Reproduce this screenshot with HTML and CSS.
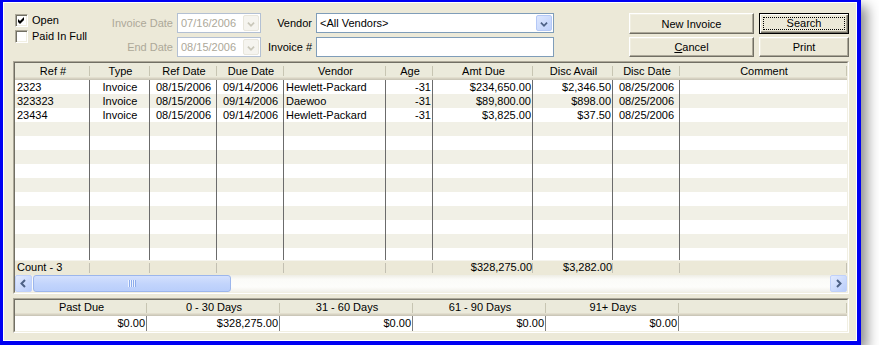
FILE: index.html
```html
<!DOCTYPE html>
<html lang="en">
  <head>
    <meta charset="UTF-8" />
    <title>Open Invoices</title>
    <link rel="stylesheet" href="styles.css">
  </head>
  <body>
    <div class="window">
      <div class="frame">
        <div class="toolbar">
          <div class="checks">
            <div class="check">
              <span class="box"><svg width="11" height="11" viewBox="0 0 11 11"><polygon points="2,4 4,6 8,2 8,5 4,9 2,7" fill="#000"/></svg></span>Open
            </div>
            <div class="check"><span class="box"></span>Paid In Full</div>
          </div>

          <div class="fields dates">
            <span class="lbl">Invoice Date</span>
            <div class="combo off">
              <span class="val">07/16/2006</span>
              <span class="drop"><svg width="16" height="16" viewBox="0 0 16 16"><polyline points="4.5,6.5 8,10 11.5,6.5" fill="none" stroke="#c9c7ba" stroke-width="2"/></svg></span>
            </div>
            <span class="lbl">End Date</span>
            <div class="combo off">
              <span class="val">08/15/2006</span>
              <span class="drop"><svg width="16" height="16" viewBox="0 0 16 16"><polyline points="4.5,6.5 8,10 11.5,6.5" fill="none" stroke="#c9c7ba" stroke-width="2"/></svg></span>
            </div>
          </div>

          <div class="fields vendor">
            <span class="lbl">Vendor</span>
            <div class="combo">
              <span class="val">&lt;All Vendors&gt;</span>
              <span class="drop"><svg width="16" height="16" viewBox="0 0 16 16"><polyline points="4.5,6.5 8,10 11.5,6.5" fill="none" stroke="#4d6185" stroke-width="2"/></svg></span>
            </div>
            <span class="lbl">Invoice #</span>
            <div class="textbox"></div>
          </div>

          <div class="buttons">
            <button class="btn">New Invoice</button>
            <button class="btn default"><span class="focus">Search</span></button>
            <button class="btn"><u>C</u>ancel</button>
            <button class="btn">Print</button>
          </div>
        </div>

        <div class="grid">
          <div class="grid-in">
            <div class="row head">
              <span>Ref #</span><span>Type</span><span>Ref Date</span><span>Due Date</span><span>Vendor</span><span>Age</span><span>Amt Due</span><span>Disc Avail</span><span>Disc Date</span><span>Comment</span>
            </div>
            <div class="body">
              <div class="row"><span>2323</span><span class="c">Invoice</span><span class="c">08/15/2006</span><span class="c">09/14/2006</span><span>Hewlett-Packard</span><span class="r">-31</span><span class="r">$234,650.00</span><span class="r">$2,346.50</span><span class="c">08/25/2006</span><span></span></div>
              <div class="row"><span>323323</span><span class="c">Invoice</span><span class="c">08/15/2006</span><span class="c">09/14/2006</span><span>Daewoo</span><span class="r">-31</span><span class="r">$89,800.00</span><span class="r">$898.00</span><span class="c">08/25/2006</span><span></span></div>
              <div class="row"><span>23434</span><span class="c">Invoice</span><span class="c">08/15/2006</span><span class="c">09/14/2006</span><span>Hewlett-Packard</span><span class="r">-31</span><span class="r">$3,825.00</span><span class="r">$37.50</span><span class="c">08/25/2006</span><span></span></div>
              <div class="row"><span></span><span></span><span></span><span></span><span></span><span></span><span></span><span></span><span></span><span></span></div>
              <div class="row"><span></span><span></span><span></span><span></span><span></span><span></span><span></span><span></span><span></span><span></span></div>
              <div class="row"><span></span><span></span><span></span><span></span><span></span><span></span><span></span><span></span><span></span><span></span></div>
              <div class="row"><span></span><span></span><span></span><span></span><span></span><span></span><span></span><span></span><span></span><span></span></div>
              <div class="row"><span></span><span></span><span></span><span></span><span></span><span></span><span></span><span></span><span></span><span></span></div>
              <div class="row"><span></span><span></span><span></span><span></span><span></span><span></span><span></span><span></span><span></span><span></span></div>
              <div class="row"><span></span><span></span><span></span><span></span><span></span><span></span><span></span><span></span><span></span><span></span></div>
              <div class="row"><span></span><span></span><span></span><span></span><span></span><span></span><span></span><span></span><span></span><span></span></div>
              <div class="row"><span></span><span></span><span></span><span></span><span></span><span></span><span></span><span></span><span></span><span></span></div>
              <div class="row"><span></span><span></span><span></span><span></span><span></span><span></span><span></span><span></span><span></span><span></span></div>
            </div>
            <div class="row foot">
              <span>Count - 3</span><span></span><span></span><span></span><span></span><span></span><span class="r">$328,275.00</span><span class="r">$3,282.00</span><span></span><span></span>
            </div>
            <div class="hscroll">
              <span class="sb-btn"><svg width="15" height="15" viewBox="0 0 15 15"><polyline points="9,4 5.5,7.5 9,11" fill="none" stroke="#4d6185" stroke-width="2"/></svg></span>
              <div class="track">
                <div class="thumb"><span class="grip"></span></div>
              </div>
              <span class="sb-btn"><svg width="15" height="15" viewBox="0 0 15 15"><polyline points="6,4 9.5,7.5 6,11" fill="none" stroke="#4d6185" stroke-width="2"/></svg></span>
            </div>
          </div>
        </div>

        <div class="summary">
          <div class="grid-in">
            <div class="sum-row head">
              <span>Past Due</span><span>0 - 30 Days</span><span>31 - 60 Days</span><span>61 - 90 Days</span><span>91+ Days</span><span></span>
            </div>
            <div class="sum-row vals">
              <span>$0.00</span><span>$328,275.00</span><span>$0.00</span><span>$0.00</span><span>$0.00</span><span></span>
            </div>
          </div>
        </div>
      </div>
    </div>
  </body>
</html>
```

FILE: styles.css
```css
* {
  box-sizing: border-box;
}

body {
  margin: 0;
  background: #fff;
  font-family: "Liberation Sans", Arial, sans-serif;
  font-size: 11px;
  color: #000;
}

.window {
  width: 861px;
  height: 345px;
  border-style: solid;
  border-color: #0000f2;
  border-width: 2px 4px 4px 3px;
  background: #ece9d8;
  box-shadow: 6px 6px 12px rgba(0, 0, 0, 0.45);
}

.frame {
  height: 100%;
  border: 1px solid #fff;
}

/* top filters */
.toolbar {
  display: flex;
  align-items: flex-start;
  height: 58px;
  padding: 10px 0 0 11px;
}

.checks {
  width: 90px;
  margin-top: -1px;
}

.check {
  display: flex;
  align-items: center;
  gap: 4px;
  height: 16px;
  white-space: nowrap;
}

.box {
  width: 13px;
  height: 13px;
  background: #fff;
  border: 1px solid;
  border-color: #aca899 #fff #fff #aca899;
  box-shadow: inset 1px 1px #716f64, inset -1px -1px #f1efe2;
  display: flex;
}

.fields {
  display: grid;
  grid-template-rows: 20px 20px;
  column-gap: 4px;
  row-gap: 4px;
}

.dates {
  grid-template-columns: 68px 84px;
  color: #aca899;
}

.vendor {
  margin-left: 1px;
  grid-template-columns: 50px 238px;
}

.lbl {
  text-align: right;
  line-height: 20px;
  white-space: nowrap;
}

.combo,
.textbox {
  display: flex;
  align-items: center;
  padding: 1px;
  background: #fff;
  border: 1px solid #7f9db9;
}

.combo .val {
  flex: 1;
  padding-left: 2px;
}

.combo .drop {
  width: 16px;
  height: 16px;
  border: 1px solid #b4c8f6;
  border-radius: 2px;
  background: linear-gradient(135deg, #dde7fe, #bfd1fb);
  display: flex;
}

.combo.off {
  border-color: #b3c0d3;
  color: #aca899;
}

.combo.off .drop {
  border-color: #e8e6dc;
  background: #f5f4ef;
}

.buttons {
  margin-left: 75px;
  display: grid;
  grid-template-columns: 125px 90px;
  grid-template-rows: 21px 20px;
  column-gap: 5px;
  row-gap: 3px;
}

.btn {
  font: inherit;
  color: #000;
  padding: 0;
  background: #ece9d8;
  border: 1px solid;
  border-color: #fff #716f64 #716f64 #fff;
  box-shadow: inset -1px -1px #aca899, inset 1px 1px #f1efe2;
}

.btn.default {
  display: flex;
  border-color: #000;
  box-shadow: inset 1px 1px #fff, inset -1px -1px #716f64, inset -2px -2px #aca899;
}

.btn .focus {
  flex: 1;
  margin: 3px;
  border: 1px dotted #000;
  line-height: 11px;
}

/* invoice grid */
.grid,
.summary {
  margin-left: 9px;
  width: 836px;
  border: 1px solid;
  border-color: #aca899 #fff #fff #aca899;
}

.grid {
  height: 233px;
}

.summary {
  margin-top: 4px;
  height: 35px;
}

.grid-in {
  height: 100%;
  border: 1px solid;
  border-color: #716f64 #f1efe2 #f1efe2 #716f64;
  background: #fff;
}

.row {
  display: grid;
  grid-template-columns: 75px 60px 67px 67px 102px 47px 100px 80px 67px 167px;
}

.row > span,
.sum-row > span {
  white-space: nowrap;
  overflow: hidden;
  padding: 0 1px 0 2px;
}

.head {
  height: 17px;
  line-height: 16px;
  background: #ebeadb;
  box-shadow: inset 0 -1px #cbc7b8, inset 0 -2px #d6d2c2, inset 0 -3px #e2dece;
}

.head > span {
  text-align: center;
  background: linear-gradient(#c7c5b2, #c7c5b2) right 3px / 1px 10px no-repeat;
}

.body {
  height: 180px;
  overflow: hidden;
}

.body .row {
  height: 14px;
  line-height: 14px;
}

.body .row:nth-child(even) {
  background: #f1f0e6;
}

.body .row > span {
  border-right: 1px solid #6b6b6b;
}

.body .row > span:last-child {
  border-right: 0;
}

.c {
  text-align: center;
}

.r {
  text-align: right;
}

.foot {
  height: 15px;
  line-height: 15px;
  background: #ece9d8;
  box-shadow: inset 0 1px #f5f4ee;
}

.foot > span {
  background: linear-gradient(#c3c0b2, #c3c0b2) right 3px / 1px 10px no-repeat;
}

.hscroll {
  display: flex;
  height: 17px;
  background: linear-gradient(#eeede5, #fbfbf8 25%, #fdfdfb 70%, #f1f0ea);
}

.sb-btn {
  width: 17px;
  height: 17px;
  padding: 0;
  border: 1px solid #c0d1fa;
  border-radius: 2px;
  background: linear-gradient(135deg, #e3ebfe, #b9cdfb);
  display: flex;
}

.track {
  flex: 1;
}

.thumb {
  width: 198px;
  height: 17px;
  margin-left: 1px;
  border: 1px solid #9cb6ec;
  border-radius: 3px;
  background: linear-gradient(#d4e0fd, #c3d5fc 50%, #b9cefb);
  display: flex;
  align-items: center;
  justify-content: center;
}

.grip {
  width: 8px;
  height: 7px;
  background: repeating-linear-gradient(90deg, #eef3fe 0 1px, #8cacec 1px 2px);
}

/* aging summary */
.sum-row {
  display: grid;
  grid-template-columns: 132px 133px 133px 133px 133px 168px;
}

.sum-row.head {
  height: 16px;
  line-height: 15px;
}

.vals {
  height: 15px;
  line-height: 15px;
}

.vals > span {
  text-align: right;
  border-right: 1px solid #808080;
}

.vals > span:last-child {
  border-right: 0;
}
```
